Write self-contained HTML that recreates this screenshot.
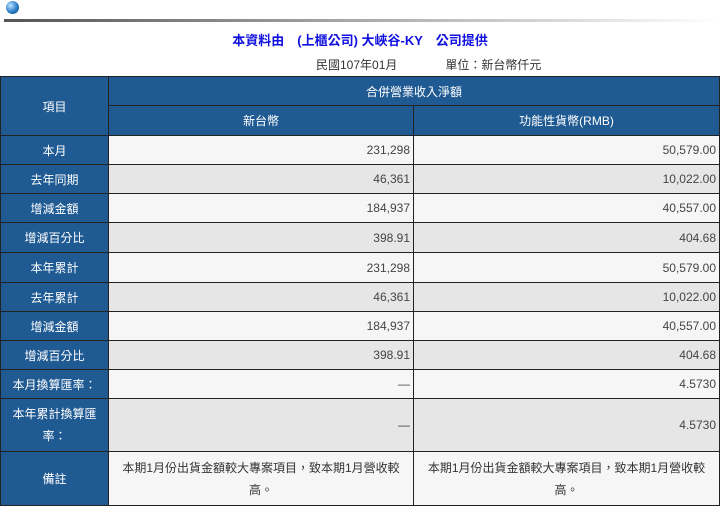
<!DOCTYPE html>
<html><head><meta charset="utf-8"><style>
body{margin:0;width:720px;height:505px;background:#fff;font-family:"Liberation Sans","Noto Sans CJK TC",sans-serif;font-size:12px;color:#222;overflow:hidden;position:relative}
.globe{position:absolute;left:6px;top:1px;width:13px;height:13px;border-radius:50%;background:radial-gradient(circle at 35% 35%,#bfe4ff,#2a7cc8 55%,#0d3f7a)}
.bar{position:absolute;left:4px;top:19px;width:716px;height:3px;background:linear-gradient(90deg,#555,#999 40%,#ddd 80%,#fff)}
.title{position:absolute;left:0;width:720px;top:30px;text-align:center;color:#1010e0;font-weight:bold;font-size:13px}
.unit{position:absolute;left:316px;top:56px;font-size:12px;color:#333}
table{position:absolute;left:0;top:76px;width:720px;border-collapse:collapse}
td{border:1px solid #222;padding:0 3px;font-size:12px}
td.h{background:#1f5a93;color:#fff;text-align:center}
td.n{text-align:right;color:#444}
tr.w td.n,tr.w td.c{background:#f6f6f6}
tr.g td.n,tr.g td.c{background:#e6e6e6}
td.c{text-align:center;color:#333;line-height:22px}
</style></head><body>
<div class="globe"></div><div class="bar"></div>
<div class="title">本資料由　(上櫃公司) 大峽谷-KY　公司提供</div>
<div class="unit">民國107年01月　　　　單位：新台幣仟元</div>
<table>
<tr style="height:29px"><td class="h" rowspan="2" style="width:101px">項目</td><td class="h" colspan="2">合併營業收入淨額</td></tr>
<tr style="height:30px"><td class="h" style="width:298px">新台幣</td><td class="h">功能性貨幣(RMB)</td></tr>
<tr class="w" style="height:29px"><td class="h">本月</td><td class="n">231,298</td><td class="n">50,579.00</td></tr>
<tr class="g" style="height:29px"><td class="h">去年同期</td><td class="n">46,361</td><td class="n">10,022.00</td></tr>
<tr class="w" style="height:29px"><td class="h">增減金額</td><td class="n">184,937</td><td class="n">40,557.00</td></tr>
<tr class="g" style="height:30px"><td class="h">增減百分比</td><td class="n">398.91</td><td class="n">404.68</td></tr>
<tr class="w" style="height:30px"><td class="h">本年累計</td><td class="n">231,298</td><td class="n">50,579.00</td></tr>
<tr class="g" style="height:29px"><td class="h">去年累計</td><td class="n">46,361</td><td class="n">10,022.00</td></tr>
<tr class="w" style="height:29px"><td class="h">增減金額</td><td class="n">184,937</td><td class="n">40,557.00</td></tr>
<tr class="g" style="height:29px"><td class="h">增減百分比</td><td class="n">398.91</td><td class="n">404.68</td></tr>
<tr class="w" style="height:29px"><td class="h">本月換算匯率：</td><td class="n">—</td><td class="n">4.5730</td></tr>
<tr class="g" style="height:53px"><td class="h" style="line-height:22px">本年累計換算匯率：</td><td class="n">—</td><td class="n">4.5730</td></tr>
<tr class="w" style="height:54px"><td class="h">備註</td><td class="c">本期1月份出貨金額較大專案項目，致本期1月營收較高。</td><td class="c">本期1月份出貨金額較大專案項目，致本期1月營收較高。</td></tr>
</table>
</body></html>
